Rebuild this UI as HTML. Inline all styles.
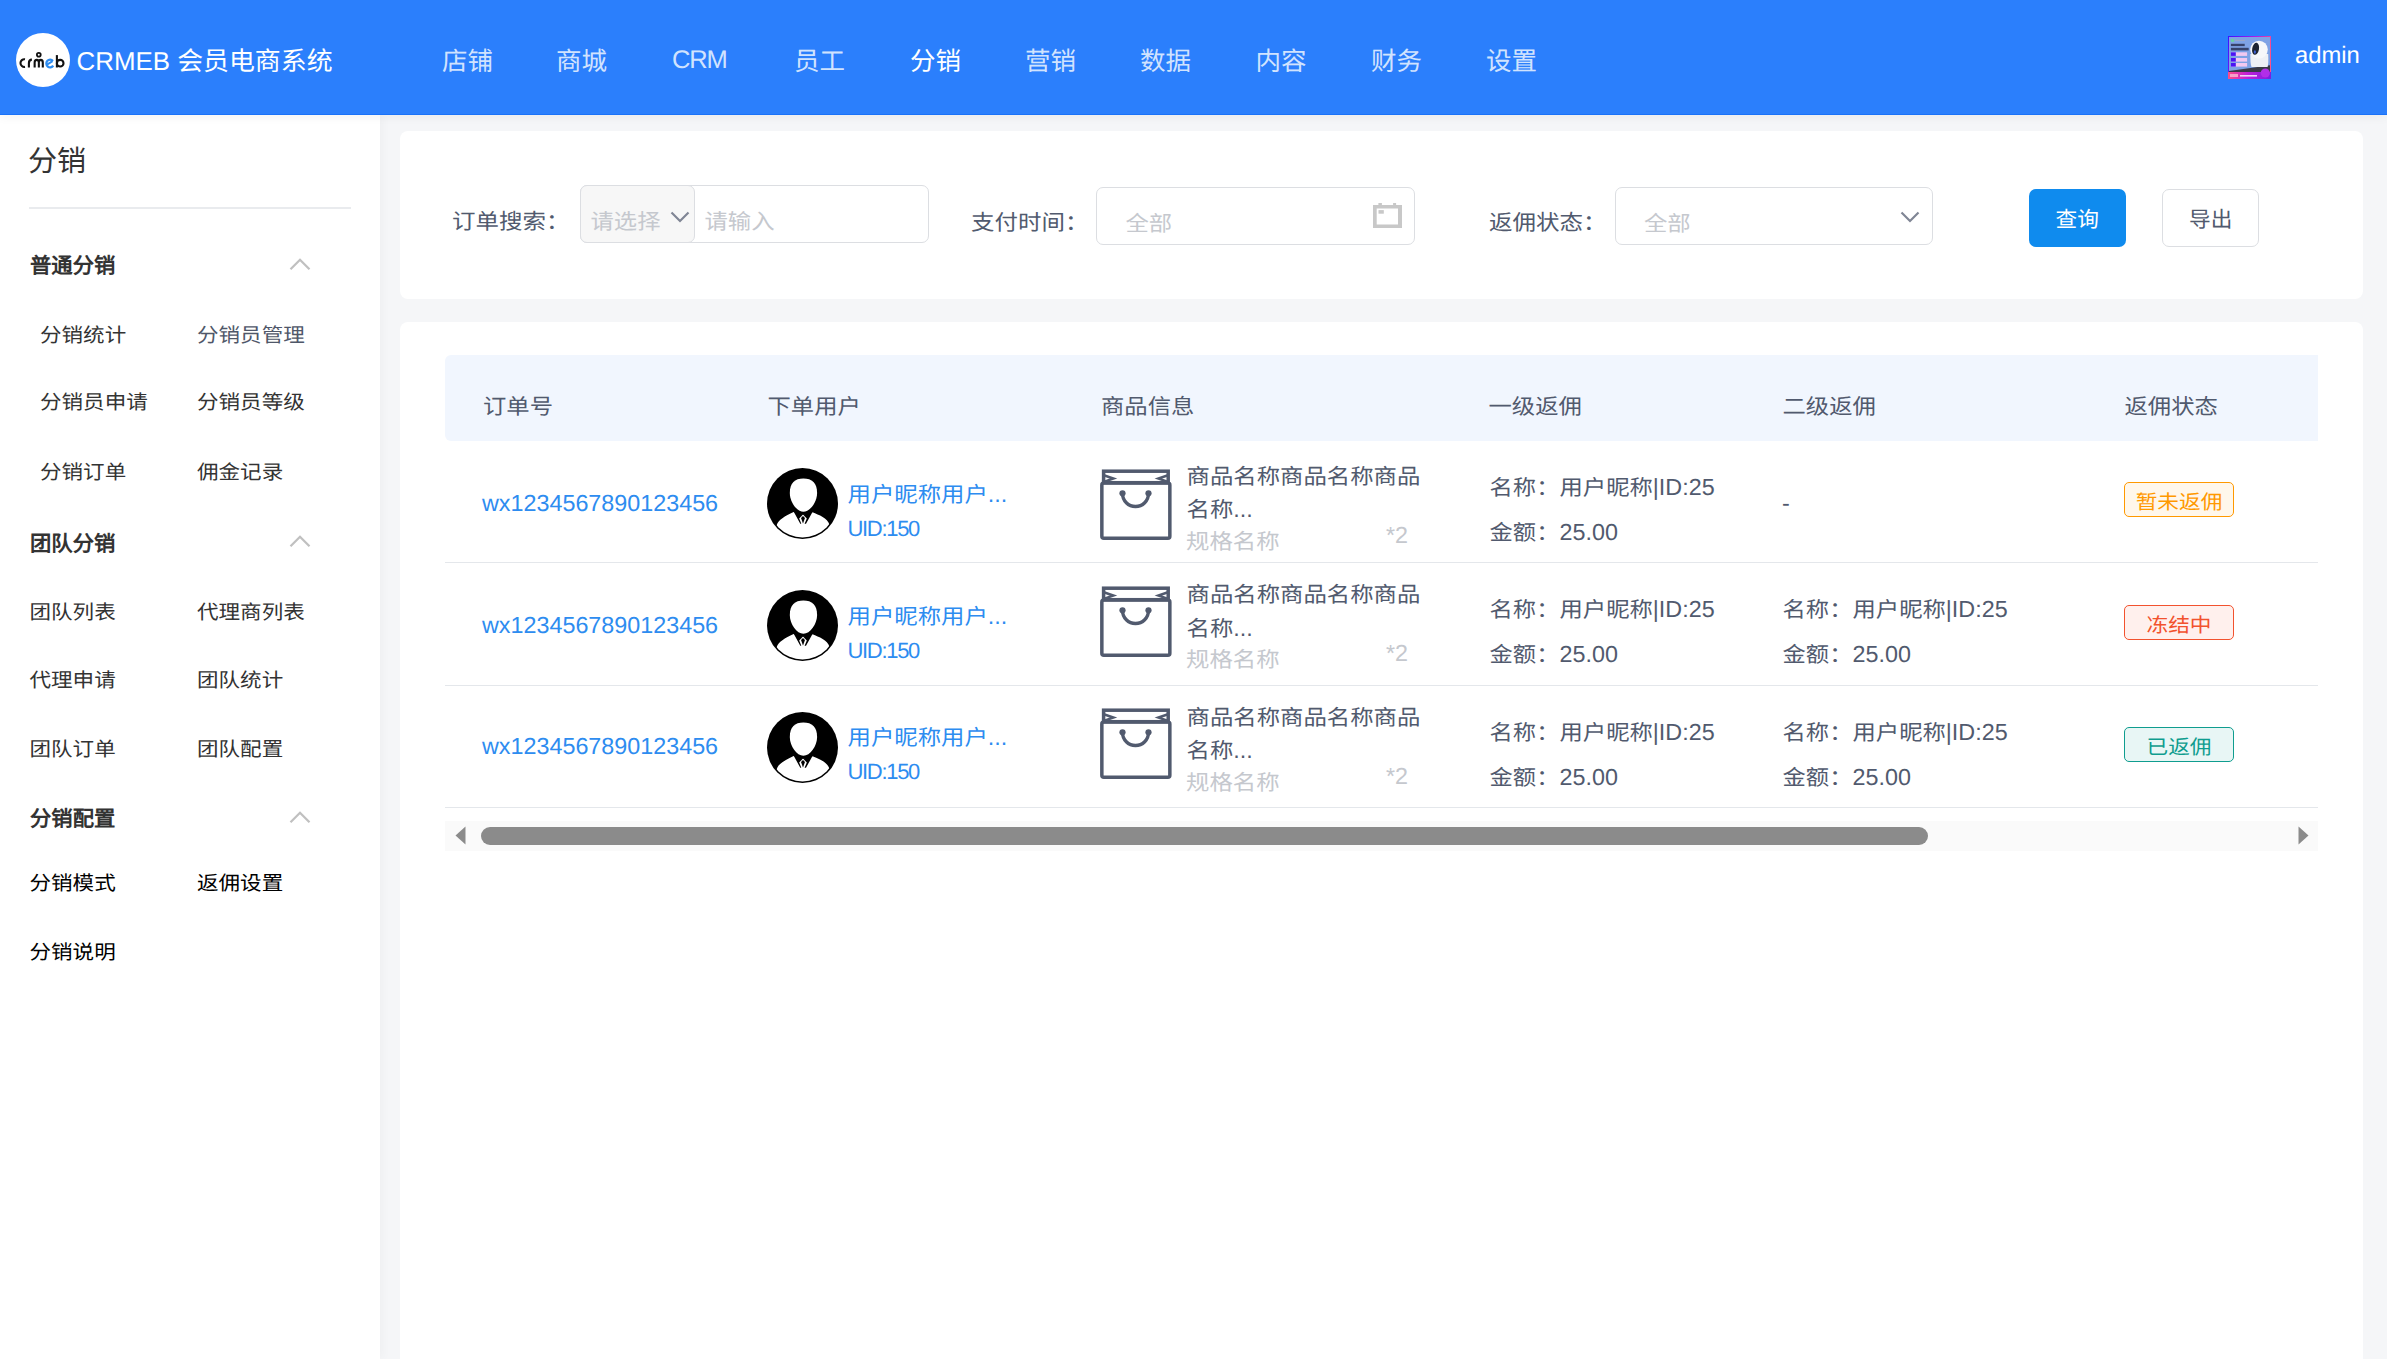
<!DOCTYPE html>
<html lang="zh-CN">
<head>
<meta charset="utf-8">
<style>
*{margin:0;padding:0;box-sizing:border-box}
html,body{width:2387px;height:1359px;overflow:hidden;background:#f5f6f8;font-family:"Liberation Sans",sans-serif;text-rendering:geometricPrecision}
.a{position:absolute;white-space:nowrap}
.hdr{position:absolute;left:0;top:0;width:2387px;height:114px;background:#2b7ffc;box-shadow:0 1px 0 #1a72f8,0 3px 10px rgba(0,0,0,.05);z-index:3}
.nav{font-size:25.5px;line-height:25.5px;color:rgba(255,255,255,.8)}
.side{position:absolute;left:0;top:115px;width:380px;height:1244px;background:#fff;z-index:2;box-shadow:2px 0 10px rgba(0,0,0,.035)}
.si{font-size:21.55px;line-height:21.55px;color:#333;transform:scaleY(.92);transform-origin:0 93%}
.sh{font-size:21.35px;line-height:21.35px;color:#333;font-weight:bold;margin-top:1.5px}
.chev{position:absolute;width:20px;height:12px}
.card{position:absolute;background:#fff;border-radius:8px}
.lbl{font-size:23.5px;line-height:23.5px;color:#515a6e;transform:scaleY(.92);transform-origin:0 93%;margin-top:0.9px}
.ph{font-size:23.33px;line-height:23.33px;color:#c5c8ce;transform:scaleY(.92);transform-origin:0 93%;margin-top:1.7px}
.box{position:absolute;border:1.5px solid #dcdee2;border-radius:7px;background:#fff}
.th{font-size:23.33px;line-height:23.33px;color:#515a6e;transform:scaleY(.92);transform-origin:0 93%;margin-top:0.8px}
.td{font-size:23.33px;line-height:23.33px;color:#515a6e}
.link{color:#2d8cf0}
.cj{display:inline-block;transform:scaleY(.92);transform-origin:0 93%}
.sy{transform:scaleY(.92);transform-origin:0 93%}
.sep{position:absolute;left:445px;width:1873px;height:1px;background:#e4e7eb}
.tag{position:absolute;width:110px;height:35px;border:1.5px solid;border-radius:5px;font-size:21.67px;line-height:21.67px}
.tag span{position:absolute;left:0;right:0;text-align:center;top:7.5px;transform:scaleY(.92);transform-origin:0 93%}
</style>
</head>
<body>
<!-- header -->
<div class="hdr">
  <svg class="a" style="left:16px;top:33px" width="54" height="54" viewBox="0 0 54 54">
    <circle cx="27" cy="27" r="27" fill="#fff"/>
    <g fill="none" stroke="#111" stroke-width="2.1">
      <path d="M9 26.3 A3.9 3.85 0 1 0 9 33.9"/>
      <path d="M12.9 34.5 V30.2 Q12.9 26.6 15.9 26.6"/>
      <path d="M18.65 34.5 V29.6 Q18.65 26.9 20.75 26.9 Q22.85 26.9 22.85 29.6 V34.5 M22.85 29.6 Q22.85 26.9 24.8 26.9 Q26.8 26.9 26.8 29.6 V34.5"/>
      <circle cx="22.8" cy="21.8" r="1.9" stroke-width="1.8"/>
      <path d="M40.9 22.1 V34.5"/>
      <circle cx="44.2" cy="30.2" r="3.3"/>
    </g>
    <g fill="none" stroke="#2d8cf0" stroke-width="2.3">
      <path d="M36.9 28 A3.7 3.9 0 1 0 37.2 32.6"/>
      <path d="M31 31.6 L36.6 28.1" stroke-width="1.9"/>
    </g>
  </svg>
  <div class="a" style="left:76.5px;top:49.5px;font-size:25.9px;line-height:25.9px;color:#fff">CRMEB 会员电商系统</div>
  <div class="a nav" style="left:442px;top:50px">店铺</div>
  <div class="a nav" style="left:556px;top:50px">商城</div>
  <div class="a nav" style="left:672px;top:48.4px;letter-spacing:-1.2px">CRM</div>
  <div class="a nav" style="left:794px;top:50px">员工</div>
  <div class="a nav" style="left:910px;top:50px;color:#fff">分销</div>
  <div class="a nav" style="left:1025px;top:50px">营销</div>
  <div class="a nav" style="left:1140px;top:50px">数据</div>
  <div class="a nav" style="left:1255.5px;top:50px">内容</div>
  <div class="a nav" style="left:1371px;top:50px">财务</div>
  <div class="a nav" style="left:1486px;top:50px">设置</div>
  <svg class="a" style="left:2228px;top:36px" width="43" height="43" viewBox="0 0 43 43">
    <defs>
      <linearGradient id="gb" x1="0" y1="0" x2="1" y2="0.3"><stop offset="0" stop-color="#3a12ff"/><stop offset=".6" stop-color="#b01ee8"/><stop offset="1" stop-color="#ff4f8a"/></linearGradient>
      <linearGradient id="gs" x1="0" y1="0" x2="1" y2="0"><stop offset="0" stop-color="#ff4d86"/><stop offset=".45" stop-color="#c21fd8"/><stop offset="1" stop-color="#7a1ee0"/></linearGradient>
    </defs>
    <rect x="0" y="0" width="43" height="43" fill="url(#gb)"/>
    <rect x="1" y="1" width="41" height="35" fill="#7fa2e5"/>
    <path d="M1 35 L42 29.2 V36 H1Z" fill="#3a3a46"/>
    <path d="M22.4 18 Q22.2 27 23.5 31 H39.6 Q40.6 27 40.2 18Z" fill="#eef0f5"/>
    <ellipse cx="31" cy="13.6" rx="8.8" ry="8.9" fill="#f6f7fa"/>
    <ellipse cx="27.6" cy="12.8" rx="3.4" ry="6.1" fill="#1d2433" transform="rotate(10 27.6 12.8)"/>
    <ellipse cx="26.9" cy="16" rx="1.1" ry="1.8" fill="#3d5fd0"/>
    <rect x="0" y="36" width="43" height="7" fill="url(#gs)"/>
    <circle cx="37.3" cy="37" r="4.6" fill="#b12ee8"/>
    <rect x="2.9" y="3" width="3.3" height="2.8" fill="#6ad0a0"/><rect x="7" y="3.8" width="10" height="1.2" fill="#9aa6c8"/>
    <rect x="2.9" y="7.8" width="13.8" height="2.3" fill="#2a3156" opacity=".85"/><rect x="2.9" y="11.8" width="17.8" height="2.6" fill="#2a3156" opacity=".85"/>
    <rect x="2.9" y="16.3" width="16.2" height="3.6" fill="#f2c8f0"/><rect x="2.9" y="16.3" width="4.9" height="3.6" fill="#4a14f4"/>
    <rect x="2.9" y="22" width="16.2" height="3.6" fill="#f2c8f0"/><rect x="2.9" y="22" width="4.9" height="3.6" fill="#4a14f4"/>
    <rect x="2.9" y="27" width="16.2" height="3.6" fill="#f2c8f0"/><rect x="2.9" y="27" width="4.9" height="3.6" fill="#4a14f4"/>
    <rect x="12" y="39" width="17" height="1.6" fill="#f0d0f8"/>
    <rect x="2" y="38" width="8" height="3" fill="#f7a0c8"/>
  </svg>
  <div class="a" style="left:2295px;top:44px;font-size:23.8px;line-height:23.8px;color:#fff">admin</div>
</div>

<!-- sidebar -->
<div class="side"></div>
<div id="sidebar-content" style="position:absolute;left:0;top:0;z-index:4">
  <div class="a" style="left:28px;top:147.8px;font-size:29.1px;line-height:29.1px;color:#333">分销</div>
  <div class="a" style="left:29px;top:207px;width:322px;height:1.5px;background:#e9ebee"></div>

  <div class="a sh" style="left:30px;top:254.5px">普通分销</div>
  <svg class="a" style="left:289px;top:256.5px" width="22" height="14" viewBox="0 0 22 14"><path d="M1.5 12.2 L11 2.8 L20.5 12.2" fill="none" stroke="#c0c0c0" stroke-width="2.3"/></svg>
  <div class="a si" style="left:40px;top:323.6px">分销统计</div>
  <div class="a si" style="left:197px;top:323.6px;color:#4f5769">分销员管理</div>
  <div class="a si" style="left:40px;top:391.4px">分销员申请</div>
  <div class="a si" style="left:197px;top:391.4px">分销员等级</div>
  <div class="a si" style="left:40px;top:460.6px">分销订单</div>
  <div class="a si" style="left:197px;top:460.6px">佣金记录</div>

  <div class="a sh" style="left:30px;top:532.5px">团队分销</div>
  <svg class="a" style="left:289px;top:534px" width="22" height="14" viewBox="0 0 22 14"><path d="M1.5 12.2 L11 2.8 L20.5 12.2" fill="none" stroke="#c0c0c0" stroke-width="2.3"/></svg>
  <div class="a si" style="left:29.5px;top:601.1px">团队列表</div>
  <div class="a si" style="left:197px;top:601.1px">代理商列表</div>
  <div class="a si" style="left:29.5px;top:668.6px">代理申请</div>
  <div class="a si" style="left:197px;top:668.6px">团队统计</div>
  <div class="a si" style="left:29.5px;top:737.7px">团队订单</div>
  <div class="a si" style="left:197px;top:737.7px">团队配置</div>

  <div class="a sh" style="left:30px;top:807.4px">分销配置</div>
  <svg class="a" style="left:289px;top:810px" width="22" height="14" viewBox="0 0 22 14"><path d="M1.5 12.2 L11 2.8 L20.5 12.2" fill="none" stroke="#c0c0c0" stroke-width="2.3"/></svg>
  <div class="a si" style="left:29.5px;top:872.4px;color:#000">分销模式</div>
  <div class="a si" style="left:197px;top:872.4px;color:#000">返佣设置</div>
  <div class="a si" style="left:29.5px;top:940.7px;color:#000">分销说明</div>
</div>

<!-- main cards -->
<div class="card" style="left:400px;top:131px;width:1963px;height:168px"></div>
<div class="card" style="left:400px;top:322px;width:1963px;height:1100px"></div>

<div id="filters" style="position:absolute;left:0;top:0">
  <div class="a lbl" style="left:452px;top:209.1px">订单搜索：</div>
  <div class="box" style="left:580px;top:185px;width:349px;height:58px"></div>
  <div class="a" style="left:580px;top:185px;width:115px;height:58px;background:#f7f7f7;border:1.5px solid #dcdee2;border-radius:7px"></div>
  <div class="a ph" style="left:590.5px;top:208.3px">请选择</div>
  <svg class="a" style="left:670px;top:210px" width="20" height="14" viewBox="0 0 20 14"><path d="M1.5 2.5 L10 11 L18.5 2.5" fill="none" stroke="#808695" stroke-width="2.2"/></svg>
  <div class="a ph" style="left:704.5px;top:208.3px">请输入</div>

  <div class="a lbl" style="left:971px;top:210.3px">支付时间：</div>
  <div class="box" style="left:1096px;top:187px;width:319px;height:58px"></div>
  <div class="a ph" style="left:1125.5px;top:210.3px">全部</div>
  <svg class="a" style="left:1373px;top:203px" width="29" height="25" viewBox="0 0 29 25">
    <path d="M0 2 H29 V25 H0Z M3.7 5.4 V21.4 H25 V5.4Z" fill="#c8c8c8" fill-rule="evenodd"/>
    <rect x="5.4" y="0" width="3.5" height="2.5" fill="#c8c8c8"/>
    <rect x="20.1" y="0" width="3" height="2.5" fill="#c8c8c8"/>
    <rect x="5.5" y="7.1" width="5.3" height="3.6" fill="#c8c8c8"/>
  </svg>

  <div class="a lbl" style="left:1489px;top:210.3px">返佣状态：</div>
  <div class="box" style="left:1615px;top:187px;width:318px;height:58px"></div>
  <div class="a ph" style="left:1644px;top:210.3px">全部</div>
  <svg class="a" style="left:1900px;top:210px" width="20" height="14" viewBox="0 0 20 14"><path d="M1.5 2.5 L10 11 L18.5 2.5" fill="none" stroke="#808695" stroke-width="2.2"/></svg>

  <div class="a" style="left:2029px;top:189px;width:97px;height:58px;background:#0f8bee;border-radius:7px"></div>
  <div class="a" style="left:2055.5px;top:208.6px;font-size:21.67px;line-height:21.67px;color:#fff">查询</div>
  <div class="box" style="left:2162px;top:189px;width:97px;height:58px"></div>
  <div class="a" style="left:2189px;top:208.6px;font-size:21.67px;line-height:21.67px;color:#515a6e">导出</div>
</div>

<!-- table -->
<div id="table" style="position:absolute;left:0;top:0">
  <div class="a" style="left:445px;top:355px;width:1873px;height:86px;background:#f1f6fe;border-radius:6px 0 0 6px"></div>
  <div class="a th" style="left:483px;top:394.1px">订单号</div>
  <div class="a th" style="left:767.5px;top:394.1px">下单用户</div>
  <div class="a th" style="left:1101px;top:394.1px">商品信息</div>
  <div class="a th" style="left:1488.5px;top:394.1px">一级返佣</div>
  <div class="a th" style="left:1782.5px;top:394.1px">二级返佣</div>
  <div class="a th" style="left:2124.5px;top:394.1px">返佣状态</div>
</div>

<div id="rows">
<div class="sep" style="top:562px"></div>
<div class="a td link" style="left:482px;top:491.55px">wx1234567890123456</div>
<svg class="a" style="left:767px;top:468.4px" width="71" height="71" viewBox="0 0 71 71">
    <circle cx="35.5" cy="35.5" r="35.5" fill="#000"/>
    <clipPath id="c0"><circle cx="35.5" cy="35.5" r="33.9"/></clipPath>
    <g clip-path="url(#c0)"><path d="M9.8 57 C11 52 18 48 26.6 44 L36 47 L45.5 44.3 C52 47 60.5 50 62.4 56.6 L72 72 L0 72Z" fill="#fff"/></g>
    <path d="M36.4 10.5 C45 10.5 50.1 15 50.1 25 C50.1 34 43 43.8 36.4 43.8 C29.8 43.8 22.8 34 22.8 25 C22.8 15 27.8 10.5 36.4 10.5Z" fill="#fff"/>
    <path d="M26.6 43.6 L31 43.6 L36 47 L41.5 43.6 L45.5 43.9 L39 55.8 L37.6 55.8 L39.8 50.6 L36 46.6 L32.2 50.6 L34.3 55.8 L33.3 55.8Z" fill="#000"/>
    <path d="M34.9 48.6 L37.1 48.6 L37.8 50.4 L36 55.6 L34.2 50.4Z" fill="#000"/>
  </svg>
<div class="a td link" style="left:847.5px;top:482.7px;font-size:23.4px;line-height:23.4px"><span class="cj">用户昵称用户</span>...</div>
<div class="a link" style="left:847.4px;top:517.6px;font-size:22px;line-height:22px;letter-spacing:-1.3px">UID:150</div>
<svg class="a" style="left:1100px;top:468.7px" width="72" height="71" viewBox="0 0 72 71">
    <g fill="none" stroke="#515a6e" stroke-width="3.5">
      <rect x="1.85" y="13.9" width="68" height="55.3" rx="2"/>
      <rect x="3.6" y="2.2" width="64.6" height="11.5"/>
      <path d="M4.5 6.5 L13.5 9.5 L4.5 12.6" stroke-width="2.4"/>
      <path d="M67.3 6.5 L58.3 9.5 L67.3 12.6" stroke-width="2.4"/>
      <path d="M22.5 24.5 A13 13 0 0 0 48.5 24.5" stroke-width="3.4"/>
    </g>
    <circle cx="22.5" cy="24.3" r="3.1" fill="#515a6e"/>
    <circle cx="48.5" cy="24.3" r="3.1" fill="#515a6e"/>
  </svg>
<div class="a td sy" style="left:1186.5px;top:464.5px;font-size:23.4px;line-height:23.4px">商品名称商品名称商品</div>
<div class="a td" style="left:1186.5px;top:498.4px;font-size:23.4px;line-height:23.4px"><span class="cj">名称</span>...</div>
<div class="a td sy" style="left:1186px;top:529.6px;color:#c5c8ce;font-size:23.4px;line-height:23.4px">规格名称</div>
<div class="a td" style="left:1385px;top:523.5px;color:#c5c8ce;margin-left:1px">*2</div>
<div class="a td" style="left:1489.5px;top:476.1px"><span class="cj">名称：用户昵称</span>|ID:25</div>
<div class="a td" style="left:1489.5px;top:521px"><span class="cj">金额：</span>25.00</div>
<div class="a td" style="left:1782px;top:491.5px">-</div>
<div class="tag" style="left:2124px;top:482px;border-color:#ff9900;background:#fff7eb;color:#ff9900"><span>暂未返佣</span></div>
<div class="sep" style="top:685px"></div>
<div class="a td link" style="left:482px;top:613.55px">wx1234567890123456</div>
<svg class="a" style="left:767px;top:590.4px" width="71" height="71" viewBox="0 0 71 71">
    <circle cx="35.5" cy="35.5" r="35.5" fill="#000"/>
    <clipPath id="c1"><circle cx="35.5" cy="35.5" r="33.9"/></clipPath>
    <g clip-path="url(#c1)"><path d="M9.8 57 C11 52 18 48 26.6 44 L36 47 L45.5 44.3 C52 47 60.5 50 62.4 56.6 L72 72 L0 72Z" fill="#fff"/></g>
    <path d="M36.4 10.5 C45 10.5 50.1 15 50.1 25 C50.1 34 43 43.8 36.4 43.8 C29.8 43.8 22.8 34 22.8 25 C22.8 15 27.8 10.5 36.4 10.5Z" fill="#fff"/>
    <path d="M26.6 43.6 L31 43.6 L36 47 L41.5 43.6 L45.5 43.9 L39 55.8 L37.6 55.8 L39.8 50.6 L36 46.6 L32.2 50.6 L34.3 55.8 L33.3 55.8Z" fill="#000"/>
    <path d="M34.9 48.6 L37.1 48.6 L37.8 50.4 L36 55.6 L34.2 50.4Z" fill="#000"/>
  </svg>
<div class="a td link" style="left:847.5px;top:604.7px;font-size:23.4px;line-height:23.4px"><span class="cj">用户昵称用户</span>...</div>
<div class="a link" style="left:847.4px;top:639.6px;font-size:22px;line-height:22px;letter-spacing:-1.3px">UID:150</div>
<svg class="a" style="left:1100px;top:585.7px" width="72" height="71" viewBox="0 0 72 71">
    <g fill="none" stroke="#515a6e" stroke-width="3.5">
      <rect x="1.85" y="13.9" width="68" height="55.3" rx="2"/>
      <rect x="3.6" y="2.2" width="64.6" height="11.5"/>
      <path d="M4.5 6.5 L13.5 9.5 L4.5 12.6" stroke-width="2.4"/>
      <path d="M67.3 6.5 L58.3 9.5 L67.3 12.6" stroke-width="2.4"/>
      <path d="M22.5 24.5 A13 13 0 0 0 48.5 24.5" stroke-width="3.4"/>
    </g>
    <circle cx="22.5" cy="24.3" r="3.1" fill="#515a6e"/>
    <circle cx="48.5" cy="24.3" r="3.1" fill="#515a6e"/>
  </svg>
<div class="a td sy" style="left:1186.5px;top:583.3px;font-size:23.4px;line-height:23.4px">商品名称商品名称商品</div>
<div class="a td" style="left:1186.5px;top:617.2px;font-size:23.4px;line-height:23.4px"><span class="cj">名称</span>...</div>
<div class="a td sy" style="left:1186px;top:648.4px;color:#c5c8ce;font-size:23.4px;line-height:23.4px">规格名称</div>
<div class="a td" style="left:1385px;top:642.3px;color:#c5c8ce;margin-left:1px">*2</div>
<div class="a td" style="left:1489.5px;top:598.1px"><span class="cj">名称：用户昵称</span>|ID:25</div>
<div class="a td" style="left:1489.5px;top:643px"><span class="cj">金额：</span>25.00</div>
<div class="a td" style="left:1782.5px;top:598.1px"><span class="cj">名称：用户昵称</span>|ID:25</div>
<div class="a td" style="left:1782.5px;top:643px"><span class="cj">金额：</span>25.00</div>
<div class="tag" style="left:2124px;top:605px;border-color:#f2522e;background:#fff0ed;color:#f2522e"><span>冻结中</span></div>
<div class="sep" style="top:807px"></div>
<div class="a td link" style="left:482px;top:734.65px">wx1234567890123456</div>
<svg class="a" style="left:767px;top:711.5px" width="71" height="71" viewBox="0 0 71 71">
    <circle cx="35.5" cy="35.5" r="35.5" fill="#000"/>
    <clipPath id="c2"><circle cx="35.5" cy="35.5" r="33.9"/></clipPath>
    <g clip-path="url(#c2)"><path d="M9.8 57 C11 52 18 48 26.6 44 L36 47 L45.5 44.3 C52 47 60.5 50 62.4 56.6 L72 72 L0 72Z" fill="#fff"/></g>
    <path d="M36.4 10.5 C45 10.5 50.1 15 50.1 25 C50.1 34 43 43.8 36.4 43.8 C29.8 43.8 22.8 34 22.8 25 C22.8 15 27.8 10.5 36.4 10.5Z" fill="#fff"/>
    <path d="M26.6 43.6 L31 43.6 L36 47 L41.5 43.6 L45.5 43.9 L39 55.8 L37.6 55.8 L39.8 50.6 L36 46.6 L32.2 50.6 L34.3 55.8 L33.3 55.8Z" fill="#000"/>
    <path d="M34.9 48.6 L37.1 48.6 L37.8 50.4 L36 55.6 L34.2 50.4Z" fill="#000"/>
  </svg>
<div class="a td link" style="left:847.5px;top:725.8px;font-size:23.4px;line-height:23.4px"><span class="cj">用户昵称用户</span>...</div>
<div class="a link" style="left:847.4px;top:760.7px;font-size:22px;line-height:22px;letter-spacing:-1.3px">UID:150</div>
<svg class="a" style="left:1100px;top:707.9px" width="72" height="71" viewBox="0 0 72 71">
    <g fill="none" stroke="#515a6e" stroke-width="3.5">
      <rect x="1.85" y="13.9" width="68" height="55.3" rx="2"/>
      <rect x="3.6" y="2.2" width="64.6" height="11.5"/>
      <path d="M4.5 6.5 L13.5 9.5 L4.5 12.6" stroke-width="2.4"/>
      <path d="M67.3 6.5 L58.3 9.5 L67.3 12.6" stroke-width="2.4"/>
      <path d="M22.5 24.5 A13 13 0 0 0 48.5 24.5" stroke-width="3.4"/>
    </g>
    <circle cx="22.5" cy="24.3" r="3.1" fill="#515a6e"/>
    <circle cx="48.5" cy="24.3" r="3.1" fill="#515a6e"/>
  </svg>
<div class="a td sy" style="left:1186.5px;top:705.5px;font-size:23.4px;line-height:23.4px">商品名称商品名称商品</div>
<div class="a td" style="left:1186.5px;top:739.4px;font-size:23.4px;line-height:23.4px"><span class="cj">名称</span>...</div>
<div class="a td sy" style="left:1186px;top:770.6px;color:#c5c8ce;font-size:23.4px;line-height:23.4px">规格名称</div>
<div class="a td" style="left:1385px;top:764.5px;color:#c5c8ce;margin-left:1px">*2</div>
<div class="a td" style="left:1489.5px;top:721.1px"><span class="cj">名称：用户昵称</span>|ID:25</div>
<div class="a td" style="left:1489.5px;top:766px"><span class="cj">金额：</span>25.00</div>
<div class="a td" style="left:1782.5px;top:721.1px"><span class="cj">名称：用户昵称</span>|ID:25</div>
<div class="a td" style="left:1782.5px;top:766px"><span class="cj">金额：</span>25.00</div>
<div class="tag" style="left:2124px;top:727px;border-color:#0f9d8f;background:#e8f6f5;color:#0f9d8f"><span>已返佣</span></div>
<div class="a" style="left:445px;top:821px;width:1873px;height:30px;background:#fafafa"></div>
<svg class="a" style="left:455px;top:826px" width="11" height="19" viewBox="0 0 11 19"><path d="M10.5 0.5 V18.5 L0.5 9.5Z" fill="#8b8b8b"/></svg>
<div class="a" style="left:481px;top:827px;width:1447px;height:18px;background:#8b8b8b;border-radius:9px"></div>
<svg class="a" style="left:2297.5px;top:826px" width="11" height="19" viewBox="0 0 11 19"><path d="M0.5 0.5 V18.5 L10.5 9.5Z" fill="#8b8b8b"/></svg>
</div>
</body>
</html>
